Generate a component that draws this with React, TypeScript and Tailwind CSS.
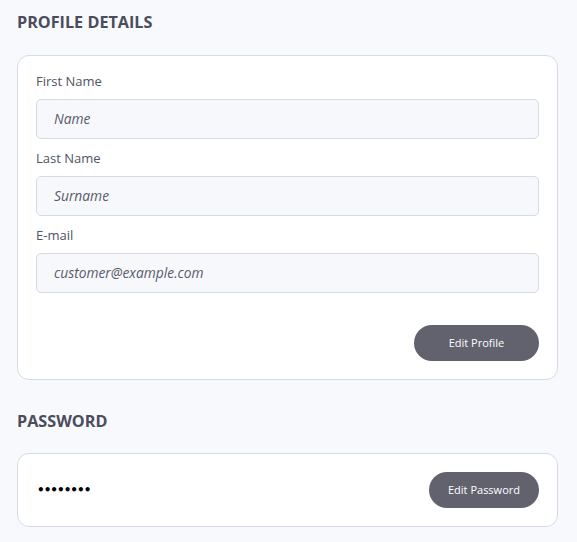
import React from "react";

const font = { fontFamily: '"Open Sans", "Noto Sans", sans-serif' };

function Field({ label, placeholder }: { label: string; placeholder: string }) {
  return (
    <div className="flex flex-col">
      <label className="text-[13px] leading-[20px] text-[#4f5463] h-[20px]">{label}</label>
      <div className="mt-[8px] h-[40px] rounded-[5px] border border-[#d5dbe6] bg-[#f7f8fc] flex items-center pl-[17px]">
        <span className="italic text-[13.8px] text-[#575b6a]">{placeholder}</span>
      </div>
    </div>
  );
}

export default function App() {
  return (
    <div className="min-h-[542px] bg-[#f8f9fd] pl-[17px] pr-[19px] pt-[10px]" style={font}>
      <h2 className="text-[16.2px] leading-[24px] font-bold text-[#4b4c5c] h-[24px]">PROFILE DETAILS</h2>
      <div className="mt-[21px] bg-white border border-[#d5dbe6] rounded-[12px] px-[18px] pt-[15px] pb-[18px]">
        <div className="flex flex-col gap-[9px]">
          <Field label="First Name" placeholder="Name" />
          <Field label="Last Name" placeholder="Surname" />
          <Field label="E-mail" placeholder="customer@example.com" />
        </div>
        <div className="flex justify-end mt-[32px]">
          <button className="h-[36px] w-[125px] rounded-full bg-[#62626f] text-white text-[11px]">Edit Profile</button>
        </div>
      </div>
      <h2 className="mt-[29px] text-[16.2px] leading-[24px] font-bold text-[#4b4c5c] h-[24px]">PASSWORD</h2>
      <div className="mt-[20px] bg-white border border-[#d5dbe6] rounded-[12px] px-[18px] py-[18px] flex items-center justify-between">
        <span className="text-[12px] font-bold text-black tracking-[-1px] ml-[1px]" style={{ fontFamily: '"DejaVu Sans", sans-serif' }}>••••••••</span>
        <button className="h-[36px] w-[110px] rounded-full bg-[#62626f] text-white text-[11px]">Edit Password</button>
      </div>
    </div>
  );
}
